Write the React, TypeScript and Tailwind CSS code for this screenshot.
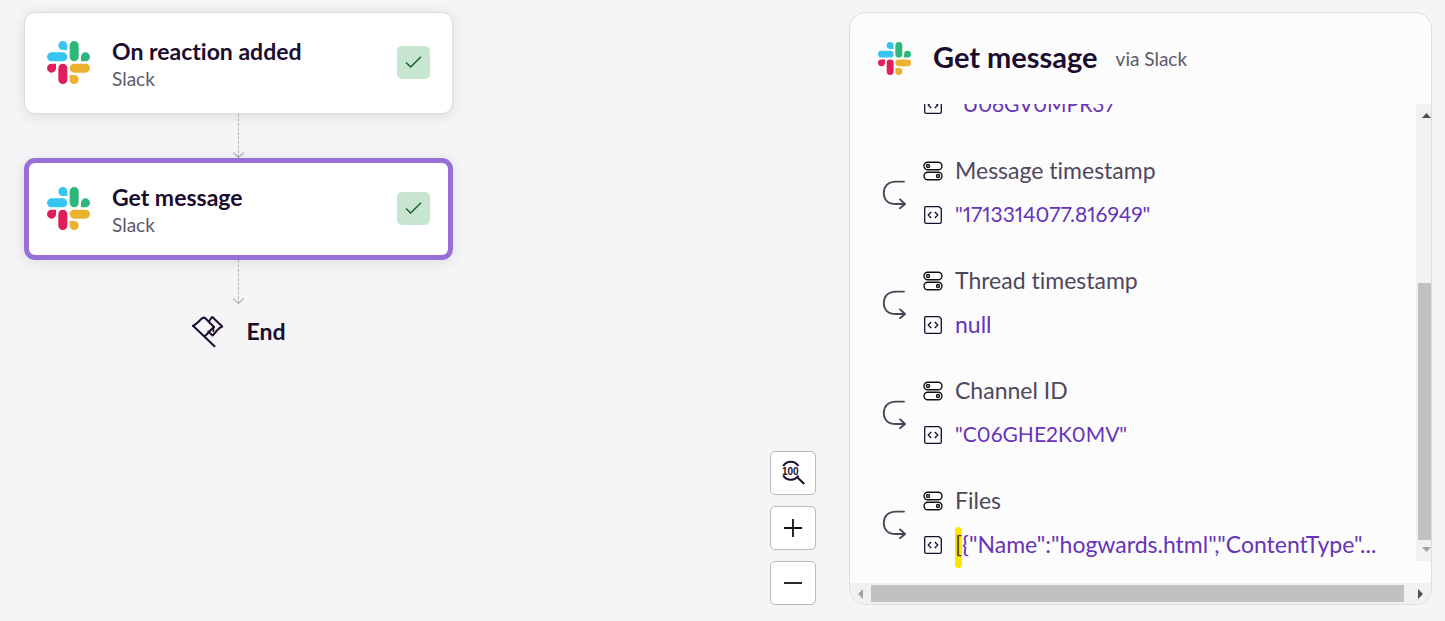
import React from "react";

function SlackLogo({ className }: { className: string }) {
  return (
    <svg viewBox="0 0 24 24" className={className} aria-hidden="true">
      <path fill="#E01E5A" d="M5.042 15.165a2.528 2.528 0 0 1-2.52 2.523A2.528 2.528 0 0 1 0 15.165a2.527 2.527 0 0 1 2.522-2.52h2.52v2.52zM6.313 15.165a2.527 2.527 0 0 1 2.521-2.52 2.527 2.527 0 0 1 2.521 2.52v6.313A2.528 2.528 0 0 1 8.834 24a2.528 2.528 0 0 1-2.521-2.522v-6.313z" />
      <path fill="#36C5F0" d="M8.834 5.042a2.528 2.528 0 0 1-2.521-2.52A2.528 2.528 0 0 1 8.834 0a2.528 2.528 0 0 1 2.521 2.522v2.52H8.834zM8.834 6.313a2.528 2.528 0 0 1 2.521 2.521 2.528 2.528 0 0 1-2.521 2.521H2.522A2.528 2.528 0 0 1 0 8.834a2.528 2.528 0 0 1 2.522-2.521h6.312z" />
      <path fill="#2EB67D" d="M18.956 8.834a2.528 2.528 0 0 1 2.522-2.521A2.528 2.528 0 0 1 24 8.834a2.528 2.528 0 0 1-2.522 2.521h-2.522V8.834zM17.688 8.834a2.528 2.528 0 0 1-2.523 2.521 2.527 2.527 0 0 1-2.52-2.521V2.522A2.527 2.527 0 0 1 15.165 0a2.528 2.528 0 0 1 2.523 2.522v6.312z" />
      <path fill="#ECB22E" d="M15.165 18.956a2.528 2.528 0 0 1 2.523 2.522A2.528 2.528 0 0 1 15.165 24a2.527 2.527 0 0 1-2.52-2.522v-2.522h2.52zM15.165 17.688a2.527 2.527 0 0 1-2.52-2.523 2.526 2.526 0 0 1 2.52-2.52h6.313A2.527 2.527 0 0 1 24 15.165a2.528 2.528 0 0 1-2.522 2.523h-6.313z" />
    </svg>
  );
}

function StepCard({ title, app, selected = false }: { title: string; app: string; selected?: boolean }) {
  return (
    <article
      className={
        "flex h-[102px] w-full items-center rounded-[11px] bg-white pb-0.5 shadow-[0_2px_14px_rgba(0,0,0,0.10)] " +
        (selected ? "border-5 border-[#976fd6] px-[18px]" : "border border-[#dcdce0] px-[22px]")
      }
    >
      <SlackLogo className="size-[43px] shrink-0" />
      <div className="ml-[22px] flex-1 pt-1">
        <h2 className="text-[23px] leading-7 font-bold text-[#1b0d2e]">{title}</h2>
        <p className="mt-0.5 text-[19px] leading-6 text-[#5e586a]">{app}</p>
      </div>
      <span className="flex size-[33px] items-center justify-center rounded-[5px] bg-[#c8e6cf]">
        <svg viewBox="0 0 18 18" className="size-[18px]" fill="none" stroke="#175c34" strokeWidth="1.5" role="img" aria-label="Done">
          <path d="M1 9.500 5.700 14 16 3.700" />
        </svg>
      </span>
    </article>
  );
}

function Connector() {
  return (
    <svg viewBox="0 0 12 44" className="h-11 w-3" fill="none" stroke="#b3b3b8" aria-hidden="true">
      <path d="M5.500 0v44" strokeDasharray="3 1.500" />
      <path d="M.3 38.500 5.500 43.500l5.200-5" strokeWidth="1.200" />
    </svg>
  );
}

function EndFlag() {
  return (
    <svg viewBox="0 0 32 33" className="h-[33px] w-8" fill="none" stroke="#1b0d2e" strokeWidth="2" strokeLinejoin="round" strokeLinecap="round" aria-hidden="true">
      <path d="M1 10.800 22.500 31.300" />
      <path d="M1 10.800C4 9.500 7 6.500 9.500 3.800c1.200-1.200 2.600-1.600 3.800-.6L22 12c-2 1.600-3.600 3.100-5.200 5.200-1.400 1.900-2.600 3-4.400 4.100" />
      <path d="M16.800 6.300c1.100-1.100 1.700-2.600 3.500-4.300l9.900 9.500c-2.300.9-3.800 2.200-5.400 4.100-1.500 1.900-2.500 3.400-4.300 4.800l-4.200-3.800" />
      <path d="M22 12c-1 1.500-1.100 2.700-.6 4.100" />
    </svg>
  );
}

function ToggleIcon() {
  return (
    <svg viewBox="0 0 20 20" className="size-5" fill="none" stroke="#111" strokeWidth="1.400" aria-hidden="true">
      <rect x="1" y="1.200" width="18" height="7.600" rx="3.800" />
      <circle cx="5" cy="5" r="1.500" />
      <rect x="1" y="11.200" width="18" height="7.600" rx="3.800" />
      <circle cx="15" cy="15" r="1.500" />
    </svg>
  );
}

function CodeIcon() {
  return (
    <svg viewBox="0 0 20 20" className="size-5" fill="none" stroke="#1b0d2e" strokeWidth="1.300" strokeLinejoin="round" aria-hidden="true">
      <path d="M2.400 1.700H16l2.300 2v13.200a1.400 1.400 0 0 1-1.400 1.400H3.100a1.400 1.400 0 0 1-1.400-1.400V2.400a.7.7 0 0 1 .7-.7z" />
      <path d="M8.200 7 5.200 10l3 3M11.800 7l3 3-3 3" />
    </svg>
  );
}

function ReturnArrow() {
  return (
    <svg viewBox="0 0 26 30" className="h-[30px] w-[26px] shrink-0" fill="none" stroke="#4b4358" strokeWidth="1.900" strokeLinecap="round" strokeLinejoin="round" aria-hidden="true">
      <path d="M22 2.600H14C5.800 2.600 1.800 7.500 1.800 14S6 25 14 25h8.500M18 20.400l5 4.600-5 4.200" />
    </svg>
  );
}

type ValueProps = { value: string; marked?: string; code?: boolean };

function Value({ value, marked, code = false }: ValueProps) {
  return (
    <dd className="flex h-11 items-center gap-3 whitespace-nowrap text-[#6633b9]">
      <CodeIcon />
      <span className={code ? "pb-0.5 text-[21px]" : "pb-0.5"}>
        {marked && <mark className="rounded-sm bg-[#ffe600] pt-[3px] pb-2.5 text-[#5a3a1a]">{marked}</mark>}
        {value}
      </span>
    </dd>
  );
}

function Field({ label, ...value }: ValueProps & { label: string }) {
  return (
    <div className="flex items-center pl-8">
      <div className="pt-0.5">
        <ReturnArrow />
      </div>
      <dl className="ml-[15px] min-w-0 text-[23px] leading-[42px]">
        <dt className="flex h-11 items-center gap-3 text-[#4f475c]">
          <ToggleIcon />
          <span className="pb-0.5">{label}</span>
        </dt>
        <Value {...value} />
      </dl>
    </div>
  );
}

const toolButton = "flex h-11 w-[46px] items-center justify-center rounded-[5px] border border-[#b9b7c0] bg-white";

const fields = [
  { label: "Message timestamp", value: '"1713314077.816949"', code: true },
  { label: "Thread timestamp", value: "null" },
  { label: "Channel ID", value: '"C06GHE2K0MV"', code: true },
  { label: "Files", value: '{"Name":"hogwards.html","ContentType"...', marked: "[" },
];

export default function App() {
  return (
    <main className="flex h-screen bg-[#f5f5f8] pt-3 pr-[13px] pb-4 pl-6 font-['Lato',sans-serif] proportional-nums [font-variant-ligatures:none]">
      <section className="flex w-[429px] flex-col items-center" aria-label="Workflow">
        <StepCard title="On reaction added" app="Slack" />
        <Connector />
        <StepCard title="Get message" app="Slack" selected />
        <Connector />
        <div className="mt-[11px] flex items-center gap-[23px]">
          <EndFlag />
          <h2 className="pb-0.5 text-[23px] leading-7 font-bold text-[#1b0d2e]">End</h2>
        </div>
      </section>

      <div className="mr-[33px] ml-auto flex flex-col justify-end gap-[11px]">
        <button type="button" aria-label="Reset zoom" className={toolButton}>
          <svg viewBox="0 0 26 26" className="size-[26px]" fill="none" stroke="#1b0d2e" strokeWidth="2" aria-hidden="true">
            <path d="M3.200 6C4.800 3.200 7.600 1.700 10.800 1.700S16.800 3.200 18.400 6M3.200 15.500C4.800 18.300 7.600 19.700 10.800 19.700s6-1.400 7.600-4.200M17 17l7.300 7" />
            <text x="2" y="14.500" fontSize="10" fontWeight="700" fontFamily="Liberation Sans, sans-serif" fill="#1b0d2e" stroke="none">100</text>
          </svg>
        </button>
        <button type="button" aria-label="Zoom in" className={toolButton}>
          <svg viewBox="0 0 18 18" className="size-[18px]" stroke="#111" strokeWidth="1.800" aria-hidden="true">
            <path d="M0 9h18M9 0v18" />
          </svg>
        </button>
        <button type="button" aria-label="Zoom out" className={toolButton}>
          <svg viewBox="0 0 18 18" className="size-[18px]" stroke="#111" strokeWidth="1.800" aria-hidden="true">
            <path d="M0 9h18" />
          </svg>
        </button>
      </div>

      <aside className="flex w-[583px] flex-col overflow-hidden rounded-2xl border border-[#dcdce1] bg-[#fcfcfc]">
        <header className="flex h-[91px] shrink-0 items-center pl-7">
          <SlackLogo className="size-[33px]" />
          <h1 className="ml-[22px] pb-1 text-[29px] leading-9 font-bold text-[#1b0d2e]">Get message</h1>
          <p className="ml-[18px] text-[19px] leading-6 text-[#5e586a]">via Slack</p>
        </header>
        <div className="flex min-h-0 flex-1">
          <div className="flex min-w-0 flex-1 flex-col justify-end gap-[22px] overflow-hidden pb-4">
            <dl className="pl-[73px] text-[23px] leading-[42px]">
              <Value value={'"U06GV0MPR37"'} code />
            </dl>
            {fields.map((f) => (
              <Field key={f.label} {...f} />
            ))}
          </div>
          <div className="mb-[22px] flex w-[15px] flex-col items-end bg-[#f1f1f1]" aria-hidden="true">
            <svg viewBox="0 0 13 18" className="h-[18px] w-[13px]"><path d="M4 14h9l-4.500-5z" fill="#505050" /></svg>
            <div className="flex-[161]" />
            <div className="w-[13px] flex-[257] bg-[#c1c1c1]" />
            <svg viewBox="0 0 13 21" className="h-[21px] w-[13px]"><path d="M4 7h9l-4.500 5z" fill="#a3a3a3" /></svg>
          </div>
        </div>
        <div className="flex h-[21px] shrink-0 items-center bg-[#f1f1f1]" aria-hidden="true">
          <svg viewBox="0 0 21 18" className="h-[18px] w-[21px]"><path d="M13 4v10L8 9z" fill="#a3a3a3" /></svg>
          <div className="h-[17px] flex-1 bg-[#c1c1c1]" />
          <svg viewBox="0 0 27 18" className="h-[18px] w-[27px]"><path d="M14 4v10l5-5z" fill="#505050" /></svg>
        </div>
      </aside>
    </main>
  );
}
